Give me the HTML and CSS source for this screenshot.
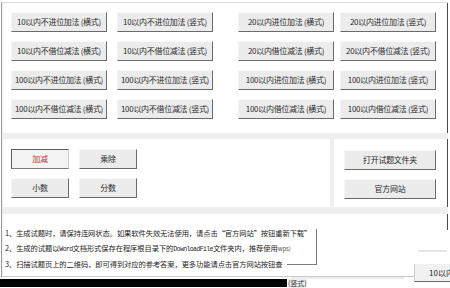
FILE: index.html
```html
<!DOCTYPE html>
<html lang="zh">
<head>
<meta charset="utf-8">
<title>试题生成</title>
<link rel="stylesheet" href="styles.css">
</head>
<body>
<div class="window">
  <div class="panel top">
    <div class="group g1">
      <button class="btn wide">10以内不进位加法 (横式)</button>
      <button class="btn wide">10以内不进位加法 (竖式)</button>
      <button class="btn wide">10以内不借位减法 (横式)</button>
      <button class="btn wide">10以内不借位减法 (竖式)</button>
      <button class="btn wide">100以内不进位加法 (横式)</button>
      <button class="btn wide">100以内不进位加法 (竖式)</button>
      <button class="btn wide">100以内不借位减法 (横式)</button>
      <button class="btn wide">100以内不借位减法 (竖式)</button>
    </div>
    <div class="group g2">
      <button class="btn wide">20以内进位加法 (横式)</button>
      <button class="btn wide">20以内进位加法 (竖式)</button>
      <button class="btn wide">20以内借位减法 (横式)</button>
      <button class="btn wide">20以内不借位减法 (竖式)</button>
      <button class="btn wide">100以内进位加法 (横式)</button>
      <button class="btn wide">100以内进位加法 (竖式)</button>
      <button class="btn wide">100以内借位减法 (横式)</button>
      <button class="btn wide">100以内借位减法 (竖式)</button>
    </div>
  </div>
  <div class="middle">
    <div class="panel mid-left">
      <button class="btn small active">加减</button>
      <button class="btn small">乘除</button>
      <button class="btn small">小数</button>
      <button class="btn small">分数</button>
    </div>
    <div class="panel mid-right">
      <button class="btn side">打开试题文件夹</button>
      <button class="btn side">官方网站</button>
    </div>
  </div>
  <div class="panel notes">
    <p>1、生成试题时，请保持连网状态。如果软件失效无法使用，请点击“官方网站”按钮重新下载”</p>
    <p>2、生成的试题以<span class="mono">Word</span>文档形式保存在程序根目录下的<span class="mono">DownloadFile</span>文件夹内，推荐使用<span class="tiny">wps)</span></p>
    <p>3、扫描试题页上的二维码，即可得到对应的参考答案，更多功能请点击官方网站按钮查</p>
  </div>
  <div class="ghost-box"></div>
  <div class="ghost-line a"></div>
  <div class="ghost-line b"></div>
  <div class="ghost-btn">10以内</div>
</div>
<div class="blackbar"><span class="bar-text">(竖式)</span></div>
</body>
</html>
```
FILE: styles.css
```css
html, body {
  margin: 0;
  padding: 0;
  background: #ffffff;
  width: 450px;
  height: 288px;
  overflow: hidden;
  font-family: "Noto Sans CJK SC", "DejaVu Sans", sans-serif;
  color: #222;
}

.window {
  position: relative;
  margin: 2px 0 0 1px;
  width: 445px;
  padding: 0 0 0 1px;
  border-left: 1px solid #9c9c9c;
  border-top: 1px solid #dcdcdc;
  background: #efefef;
  box-sizing: content-box;
}

.panel {
  background: #ffffff;
}

.top {
  height: 130px;
  box-sizing: border-box;
  padding: 9px 0 0 8px;
  display: flex;
  border-right: 1px solid #4a4a4a;
}

.group {
  display: grid;
  grid-template-columns: 96px 96px;
  grid-auto-rows: 20px;
  row-gap: 9px;
}

.g1 { column-gap: 10px; }
.g2 { column-gap: 6px; margin-left: 25px; }

.btn {
  font-family: "Noto Sans CJK SC", "DejaVu Sans", sans-serif;
  font-size: 8px;
  line-height: 1;
  color: #2a2a2a;
  background: #ececec;
  border: 1px solid;
  border-color: #fafafa #6a6a6a #6a6a6a #f4f4f4;
  padding: 0;
  margin: 0;
  height: 20px;
  white-space: nowrap;
  letter-spacing: -0.3px;
}

.middle {
  display: flex;
  gap: 4px;
  margin-top: 6px;
  height: 68px;
  border-right: 1px solid #4a4a4a;
}

.mid-left {
  width: 327px;
  box-sizing: border-box;
  padding: 10px 0 0 8px;
  display: grid;
  grid-template-columns: 58px 58px;
  grid-auto-rows: 20px;
  column-gap: 10px;
  row-gap: 9px;
  align-content: start;
}

.mid-right {
  flex: 1;
  box-sizing: border-box;
  padding: 11px 0 0 10px;
  display: grid;
  grid-template-columns: 92px;
  grid-auto-rows: 20px;
  row-gap: 9px;
  align-content: start;
}

.btn.active {
  color: #b8323c;
  background: #f3f3f3;
  border-color: #5c5c5c #cfcfcf #7a7a7a #5c5c5c;
}

.notes {
  margin-top: 7px;
  height: 63px;
  box-sizing: border-box;
  padding: 12px 0 0 2px;
  border-bottom: 1px solid #c9c9c9;
  background:
    linear-gradient(#4a4a4a, #4a4a4a) right top / 1px 16px no-repeat,
    #ffffff;
}

.notes p {
  margin: 0;
  font-size: 7.3px;
  line-height: 14.5px;
  white-space: nowrap;
  color: #1e1e1e;
  letter-spacing: -0.1px;
}

.mono {
  font-family: "Liberation Mono", monospace;
  font-size: 6.5px;
  letter-spacing: -0.6px;
}

.tiny {
  font-size: 6px;
  color: #555;
}

.ghost-box {
  position: absolute;
  left: 285px;
  top: 226px;
  width: 29px;
  height: 35px;
  border-right: 1px solid #7a7a7a;
  border-bottom: 1px solid #7a7a7a;
}

.ghost-line {
  position: absolute;
  height: 2px;
  background: #e6e6e6;
}

.ghost-line.a {
  left: 416px;
  top: 247px;
  width: 29px;
}

.ghost-line.b {
  left: 290px;
  top: 274px;
  width: 112px;
  background: #ececec;
}

.ghost-btn {
  position: absolute;
  left: 412px;
  top: 261px;
  width: 40px;
  height: 18px;
  box-sizing: border-box;
  padding: 4px 0 0 14px;
  font-size: 8px;
  line-height: 10px;
  white-space: nowrap;
  overflow: hidden;
  background: #f1f1f1;
  border-left: 1px solid #d0d0d0;
  border-bottom: 1px solid #6a6a6a;
  color: #222;
}

.blackbar {
  margin-top: 2px;
  width: 287px;
  height: 8px;
  background: #000;
  position: relative;
}

.bar-text {
  position: absolute;
  left: 288px;
  top: -1px;
  font-size: 7px;
  line-height: 10px;
  color: #333;
  background: #eeeeee;
  white-space: nowrap;
}
```
